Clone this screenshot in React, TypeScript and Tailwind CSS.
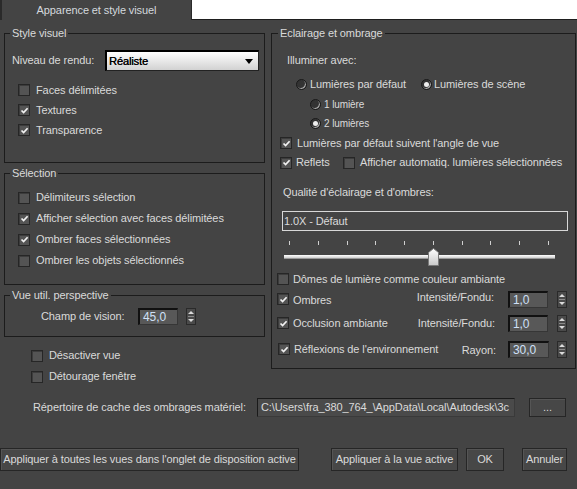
import React from "react";

function Check({ checked }: { checked?: boolean }) {
  return (
    <span className="w-[12px] h-[12px] shrink-0 border border-[#262626] bg-[#545454] shadow-[inset_1px_1px_0_#3c3c3c] flex items-center justify-center">
      {checked && (
        <svg width="9" height="9" viewBox="0 0 9 9">
          <path d="M1.5 4.5 L3.6 6.6 L7.6 2.2" stroke="#f2f2f2" strokeWidth="1.7" fill="none" />
        </svg>
      )}
    </span>
  );
}

function Radio({ checked }: { checked?: boolean }) {
  return (
    <span className="w-[11px] h-[11px] shrink-0 rounded-full border border-[#1a1a1a] bg-[#333333] shadow-[inset_-1px_-1px_0_#a8a8a8] flex items-center justify-center">
      {checked && <span className="w-[5px] h-[5px] rounded-full bg-[#eeeeee]" />}
    </span>
  );
}

function Spinner() {
  return (
    <span className="w-[10px] h-[17px] shrink-0 border border-[#2a2a2a] bg-[#4a4a4a] flex flex-col items-center justify-center gap-[2px]">
      <svg width="6" height="3" viewBox="0 0 6 3">
        <path d="M0 3 L3 0 L6 3Z" fill="#dcdcdc" />
      </svg>
      <span className="w-[6px] h-px bg-[#8a8a8a]" />
      <svg width="6" height="3" viewBox="0 0 6 3">
        <path d="M0 0 L6 0 L3 3Z" fill="#dcdcdc" />
      </svg>
    </span>
  );
}

function NumInput({ v, w = "w-[40px]" }: { v: string; w?: string }) {
  return (
    <span
      className={`${w} h-[17px] shrink-0 bg-[#585858] border-t-2 border-l-2 border-t-[#111111] border-l-[#111111] border-r border-b border-r-[#363636] border-b-[#363636] text-[#cfe0f7] text-[12px] leading-none flex items-center pl-[3px]`}
    >
      {v}
    </span>
  );
}

function Btn({ children, cls }: { children: React.ReactNode; cls: string }) {
  return (
    <div
      className={`${cls} h-[23px] shrink-0 border border-[#262626] bg-[#474747] shadow-[inset_1px_1px_0_#555555] flex items-center justify-center whitespace-nowrap text-[#dadada]`}
    >
      {children}
    </div>
  );
}

export default function App() {
  const ticks = Array.from({ length: 10 });
  return (
    <div className="w-[577px] h-[489px] bg-[#444444] overflow-hidden text-[11px] leading-[13px] text-[#dadada] font-['Liberation_Sans',Arial,sans-serif] tracking-[-0.1px]">
      {/* tab bar */}
      <div className="flex h-[20px]">
        <div className="w-[191px] h-[20px] border-l-2 border-[#2a2a2a] flex items-center justify-center text-[#d4d9de]">
          Apparence et style visuel
        </div>
        <div className="flex-1 bg-white border-b border-[#1e1e1e] border-l border-l-[#2a2a2a]" />
      </div>

      <div className="flex items-start">
        {/* left column */}
        <div className="ml-[4px] w-[261px] flex flex-col">
          <fieldset className="mt-[7px] border border-[#1c1c1c] pb-[22px]">
            <legend className="ml-[5px] px-[2px] leading-[13px]">Style visuel</legend>
            <div className="mt-[10px] h-[21px] flex items-center pl-[7px]">
              <span className="w-[93px]">Niveau de rendu:</span>
              <div className="w-[154px] h-[21px] border-t-2 border-l-2 border-t-black border-l-black border-r border-b border-r-[#222] border-b-[#222] bg-gradient-to-b from-white to-[#d2d2d2] flex items-center justify-between pl-[2px] pr-[5px] text-black">
                <span className="[text-shadow:0.3px_0_0_#000]">Réaliste</span>
                <svg width="8" height="5" viewBox="0 0 8 5">
                  <path d="M0 0 L8 0 L4 5Z" fill="#000" />
                </svg>
              </div>
            </div>
            <div className="mt-[9px] flex flex-col pl-[13px]">
              {[
                ["Faces délimitées", false],
                ["Textures", true],
                ["Transparence", true],
              ].map(([t, c]) => (
                <div key={t as string} className="h-[20px] flex items-center gap-[6px]">
                  <Check checked={c as boolean} />
                  <span>{t as string}</span>
                </div>
              ))}
            </div>
          </fieldset>

          <fieldset className="mt-[4px] border border-[#1c1c1c] pb-[13px]">
            <legend className="ml-[5px] px-[2px] leading-[13px]">Sélection</legend>
            <div className="mt-[7px] flex flex-col pl-[13px]">
              {[
                ["Délimiteurs sélection", false],
                ["Afficher sélection avec faces délimitées", true],
                ["Ombrer faces sélectionnées", true],
                ["Ombrer les objets sélectionnés", false],
              ].map(([t, c]) => (
                <div key={t as string} className="h-[21px] flex items-center gap-[6px]">
                  <Check checked={c as boolean} />
                  <span>{t as string}</span>
                </div>
              ))}
            </div>
          </fieldset>

          <fieldset className="mt-[4px] border border-[#1c1c1c] pb-[10px]">
            <legend className="ml-[5px] px-[2px] leading-[13px]">Vue util. perspective</legend>
            <div className="mt-[5px] h-[19px] flex items-center pl-[36px]">
              <span className="w-[97px]">Champ de vision:</span>
              <NumInput v="45,0" />
              <span className="ml-[8px]">
                <Spinner />
              </span>
            </div>
          </fieldset>

          <div className="mt-[8px] flex flex-col pl-[27px]">
            <div className="h-[21px] flex items-center gap-[6px]">
              <Check />
              <span>Désactiver vue</span>
            </div>
            <div className="h-[21px] flex items-center gap-[6px]">
              <Check />
              <span>Détourage fenêtre</span>
            </div>
          </div>
        </div>

        {/* right column */}
        <fieldset className="ml-[6px] mt-[7px] w-[305px] border border-[#1c1c1c] pb-[9px]">
          <legend className="ml-[6px] px-[2px] leading-[13px]">Eclairage et ombrage</legend>
          <div className="mt-[14px] h-[13px] pl-[15px]">Illuminer avec:</div>
          <div className="mt-[8px] h-[18px] flex items-center pl-[24px]">
            <div className="w-[125px] flex items-center gap-[3px]">
              <Radio />
              <span>Lumières par défaut</span>
            </div>
            <div className="flex items-center gap-[2px]">
              <Radio checked />
              <span>Lumières de scène</span>
            </div>
          </div>
          <div className="mt-[2px] flex flex-col pl-[38px] text-[10px]">
            <div className="h-[19px] flex items-center gap-[3px]">
              <Radio />
              <span>1 lumière</span>
            </div>
            <div className="h-[19px] flex items-center gap-[3px]">
              <Radio checked />
              <span>2 lumières</span>
            </div>
          </div>
          <div className="h-[20px] flex items-center gap-[5px] pl-[8px]">
            <Check checked />
            <span>Lumières par défaut suivent l'angle de vue</span>
          </div>
          <div className="h-[19px] flex items-center pl-[8px]">
            <div className="w-[63px] flex items-center gap-[4px]">
              <Check checked />
              <span>Reflets</span>
            </div>
            <div className="flex items-center gap-[5px]">
              <Check />
              <span>Afficher automatiq. lumières sélectionnées</span>
            </div>
          </div>
          <div className="mt-[14px] h-[13px] pl-[11px]">Qualité d'éclairage et d'ombres:</div>
          <div className="mt-[12px] ml-[10px] w-[286px] h-[20px] border border-[#d8d8d8] flex items-center pl-[1px]">
            1.0X - Défaut
          </div>
          <div className="relative mt-[10px] ml-[12px] w-[271px] h-[18px]">
            <div className="flex justify-between pl-[5px] pr-[6px]">
              {ticks.map((_, i) => (
                <span key={i} className="w-px h-[4px] bg-[#d0d0d0]" />
              ))}
            </div>
            <div className="mt-[10px] h-[4px] bg-gradient-to-b from-[#ffffff] to-[#cfcfcf] border-b border-[#999]" />
            <svg className="absolute left-[144px] top-[7px]" width="11" height="18" viewBox="0 0 11 18">
              <defs>
                <linearGradient id="tg" x1="0" y1="0" x2="0" y2="1">
                  <stop offset="0" stopColor="#ffffff" />
                  <stop offset="1" stopColor="#c8c8c8" />
                </linearGradient>
              </defs>
              <path d="M0.5 4.5 L5.5 0.5 L10.5 4.5 V17.5 H0.5Z" fill="url(#tg)" stroke="#7a7a7a" />
            </svg>
          </div>
          <div className="mt-[10px] h-[20px] flex items-center gap-[4px] pl-[5px]">
            <Check />
            <span>Dômes de lumière comme couleur ambiante</span>
          </div>
          <div className="h-[20px] flex items-center pl-[5px] pr-[8px]">
            <Check checked />
            <span className="ml-[4px] mt-[3px]">Ombres</span>
            <span className="ml-auto -mt-[3px]">Intensité/Fondu:</span>
            <span className="ml-[14px]">
              <NumInput v="1,0" />
            </span>
            <span className="ml-[9px]">
              <Spinner />
            </span>
          </div>
          <div className="mt-[4px] h-[20px] flex items-center pl-[5px] pr-[8px]">
            <Check checked />
            <span className="ml-[4px]">Occlusion ambiante</span>
            <span className="ml-auto mt-[1px]">Intensité/Fondu:</span>
            <span className="ml-[13px]">
              <NumInput v="1,0" />
            </span>
            <span className="ml-[9px]">
              <Spinner />
            </span>
          </div>
          <div className="mt-[6px] h-[20px] flex items-center pl-[6px] pr-[8px]">
            <Check checked />
            <span className="ml-[4px]">Réflexions de l'environnement</span>
            <span className="ml-auto mt-[3px]">Rayon:</span>
            <span className="ml-[12px]">
              <NumInput v="30,0" w="w-[41px]" />
            </span>
            <span className="ml-[8px]">
              <Spinner />
            </span>
          </div>
        </fieldset>
      </div>

      {/* cache path */}
      <div className="mt-[11px] h-[19px] flex items-center">
        <span className="pl-[33px] w-[257px]">Répertoire de cache des ombrages matériel:</span>
        <div className="w-[258px] h-[19px] border-t border-l border-t-[#1a1a1a] border-l-[#1a1a1a] border-r border-b border-r-[#3a3a3a] border-b-[#3a3a3a] bg-[#4a4a4a] overflow-hidden whitespace-nowrap flex items-center pl-[3px]">
          <span>{"C:\\Users\\fra_380_764_\\AppData\\Local\\Autodesk\\3c"}</span>
        </div>
        <Btn cls="ml-[14px] w-[37px] !h-[19px]">...</Btn>
      </div>

      {/* buttons */}
      <div className="mt-[31px] flex items-center">
        <Btn cls="w-[299px]">Appliquer à toutes les vues dans l'onglet de disposition active</Btn>
        <Btn cls="ml-[32px] w-[127px]">Appliquer à la vue active</Btn>
        <Btn cls="ml-[8px] w-[38px]">OK</Btn>
        <Btn cls="ml-[18px] w-[45px]">Annuler</Btn>
      </div>
    </div>
  );
}
